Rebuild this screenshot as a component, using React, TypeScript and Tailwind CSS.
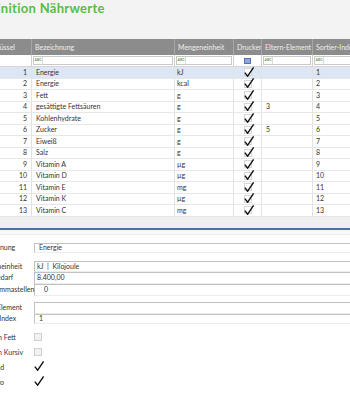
import { Fragment } from "react";

type Row = {
  key: number;
  name: string;
  unit: string;
  print: boolean;
  parent?: string;
  sort: number;
};

const rows: Row[] = [
  { key: 1, name: "Energie", unit: "kJ", print: true, sort: 1 },
  { key: 2, name: "Energie", unit: "kcal", print: true, sort: 2 },
  { key: 3, name: "Fett", unit: "g", print: true, sort: 3 },
  { key: 4, name: "gesättigte Fettsäuren", unit: "g", print: true, parent: "3", sort: 4 },
  { key: 5, name: "Kohlenhydrate", unit: "g", print: true, sort: 5 },
  { key: 6, name: "Zucker", unit: "g", print: true, parent: "5", sort: 6 },
  { key: 7, name: "Eiweiß", unit: "g", print: true, sort: 7 },
  { key: 8, name: "Salz", unit: "g", print: true, sort: 8 },
  { key: 9, name: "Vitamin A", unit: "µg", print: true, sort: 9 },
  { key: 10, name: "Vitamin D", unit: "µg", print: true, sort: 10 },
  { key: 11, name: "Vitamin E", unit: "mg", print: true, sort: 11 },
  { key: 12, name: "Vitamin K", unit: "µg", print: true, sort: 12 },
  { key: 13, name: "Vitamin C", unit: "mg", print: true, sort: 13 },
];

const headers = [
  "Schlüssel",
  "Bezeichnung",
  "Mengeneinheit",
  "Drucken",
  "Eltern-Element",
  "Sortier-Index",
];

const gridCols = "grid grid-cols-[52px_143px_59px_28px_51px_60px]";

const Check = ({ framed = true }: { framed?: boolean }) => (
  <span
    className={`relative block h-[8px] w-[8px] ${
      framed ? "border border-[#d6d6d6] bg-white" : ""
    }`}
  >
    <svg
      viewBox="0 0 10 10"
      className="absolute -top-[2.5px] -left-[0.5px] h-[10px] w-[10px] overflow-visible"
    >
      <path
        d="M0.8 5.6 L3.7 9.2 L9.6 0.4"
        fill="none"
        stroke="#111"
        strokeWidth="1.4"
        strokeLinejoin="round"
      />
    </svg>
  </span>
);

const FilterBox = () => (
  <div className="flex h-full items-center border border-[#c9c9c9] bg-white">
    <span className="flex h-full w-[9px] items-center justify-center border-r border-[#dadada] text-[3.5px] font-bold leading-none text-[#6f9a5c]">
      ABC
    </span>
  </div>
);

const Label = ({
  children,
  shift = "-ml-[4px] w-[58px]",
}: {
  children: string;
  shift?: string;
}) => (
  <span className={`relative z-10 shrink-0 whitespace-nowrap ${shift}`}>
    {children}
  </span>
);

const Field = ({
  label,
  value,
  h,
  className = "",
  valueClass = "pl-[2px]",
}: {
  label: string;
  value: string;
  h: string;
  className?: string;
  valueClass?: string;
}) => (
  <div className={`flex items-center ${h} ${className}`}>
    <Label>{label}</Label>
    <div
      className={`flex h-full flex-1 items-center border-t border-l border-b border-t-[#c2c2c2] border-l-[#c2c2c2] border-b-[#ececec] bg-white ${valueClass}`}
    >
      {value}
    </div>
  </div>
);

const CheckField = ({
  label,
  checked,
  shift,
}: {
  label: string;
  checked: boolean;
  shift?: string;
}) => (
  <div className="flex h-[15px] items-center">
    <Label shift={shift}>{label}</Label>
    {checked ? (
      <Check framed={false} />
    ) : (
      <span className="block h-[8px] w-[8px] border border-[#cfcfcf] bg-[#f2f2f2]" />
    )}
  </div>
);

const App = () => {
  return (
    <div className="h-[394px] w-[350px] overflow-hidden bg-white font-['Lato','Liberation_Sans',sans-serif] text-[7px] leading-none text-[#333]">
      <div className="-ml-[20px] w-[392px]">
        {/* title */}
        <div className="h-[39px] bg-[#f3f3f3] pt-[2px]">
          <h1 className="-ml-[5px] whitespace-nowrap text-[13px] font-bold leading-[13px] tracking-[0.3px] text-[#56be44]">
            Definition Nährwerte
          </h1>
        </div>

        {/* grid header */}
        <div className={`${gridCols} h-[16px] bg-[#8c8c8c] text-[#eeeeee]`}>
          {headers.map((h, i) => (
            <div
              key={h}
              className={`flex items-center overflow-hidden whitespace-nowrap border-r border-[#a7a7a7] ${
                i === 0 ? "pl-[7px]" : "pl-[3px]"
              }`}
            >
              {h}
            </div>
          ))}
        </div>

        {/* filter row */}
        <div className={`${gridCols} h-[12px] border-b border-[#d6d6d6] bg-white`}>
          {headers.map((h, i) => (
            <div key={h} className="border-r border-[#cfcfcf] px-[1px] py-[1px]">
              {i === 0 ? (
                <div className="h-full bg-white" />
              ) : i === 3 ? (
                <div className="flex h-full items-center justify-center">
                  <span className="block h-[6px] w-[7px] border border-[#5b6fb5] bg-[#93a5de]" />
                </div>
              ) : (
                <FilterBox />
              )}
            </div>
          ))}
        </div>

        {/* rows */}
        {rows.map((r, idx) => (
          <div
            key={r.key}
            className={`${gridCols} h-[11.5px] border-b border-[#e7e7e7] ${
              idx === 0 ? "bg-[#dce6f5]" : "bg-white"
            }`}
          >
            <div className="flex items-center justify-end border-r border-[#e2e2e2] pr-[4px]">
              {r.key}
            </div>
            <div className="flex items-center whitespace-nowrap border-r border-[#e2e2e2] pl-[4px]">
              {r.name}
            </div>
            <div className="flex items-center border-r border-[#e2e2e2] pl-[2px]">
              {r.unit}
            </div>
            <div className="flex items-center justify-center border-r border-[#e2e2e2]">
              {r.print && <Check />}
            </div>
            <div className="flex items-center border-r border-[#e2e2e2] pl-[4px]">
              {r.parent}
            </div>
            <div className="flex items-center pl-[3px]">{r.sort}</div>
          </div>
        ))}

        {/* scroll strip + splitter */}
        <div className="h-[11px] bg-[#efefef]" />
        <div className="h-[2px] bg-[#4d6ea8]" />
        <div className="h-[5px] border-b border-[#ededed] bg-[#f8f8f8]" />

        {/* detail form */}
        <div className="flex flex-col">
          <Field label="Bezeichnung" value="Energie" h="h-[10px]" className="mt-[8px]" valueClass="pl-[4px]" />
          <Field label="Mengeneinheit" value="kJ  |  Kilojoule" h="h-[11px]" className="mt-[8px] whitespace-pre" />
          <Field label="Tagesbedarf" value="8.400,00" h="h-[12px]" />
          <Field label="Nachkommastellen" value="0" h="h-[12px]" valueClass="pl-[9px]" />
          <Field label="Eltern-Element" value="" h="h-[12px]" className="mt-[6px]" />
          <Field label="Sortier-Index" value="1" h="h-[10px]" valueClass="pl-[4px]" />
          <div className="mt-[6px]">
            {[
              { label: "Drucken Fett", checked: false },
              { label: "Drucken Kursiv", checked: false },
              { label: "Pflichtfeld", checked: true, shift: "-ml-[7px] w-[61px]" },
              { label: "Als Makro", checked: true, shift: "-ml-[7px] w-[61px]" },
            ].map((c) => (
              <Fragment key={c.label}>
                <CheckField label={c.label} checked={c.checked} shift={c.shift} />
              </Fragment>
            ))}
          </div>
        </div>
      </div>
    </div>
  );
};

export default App;
